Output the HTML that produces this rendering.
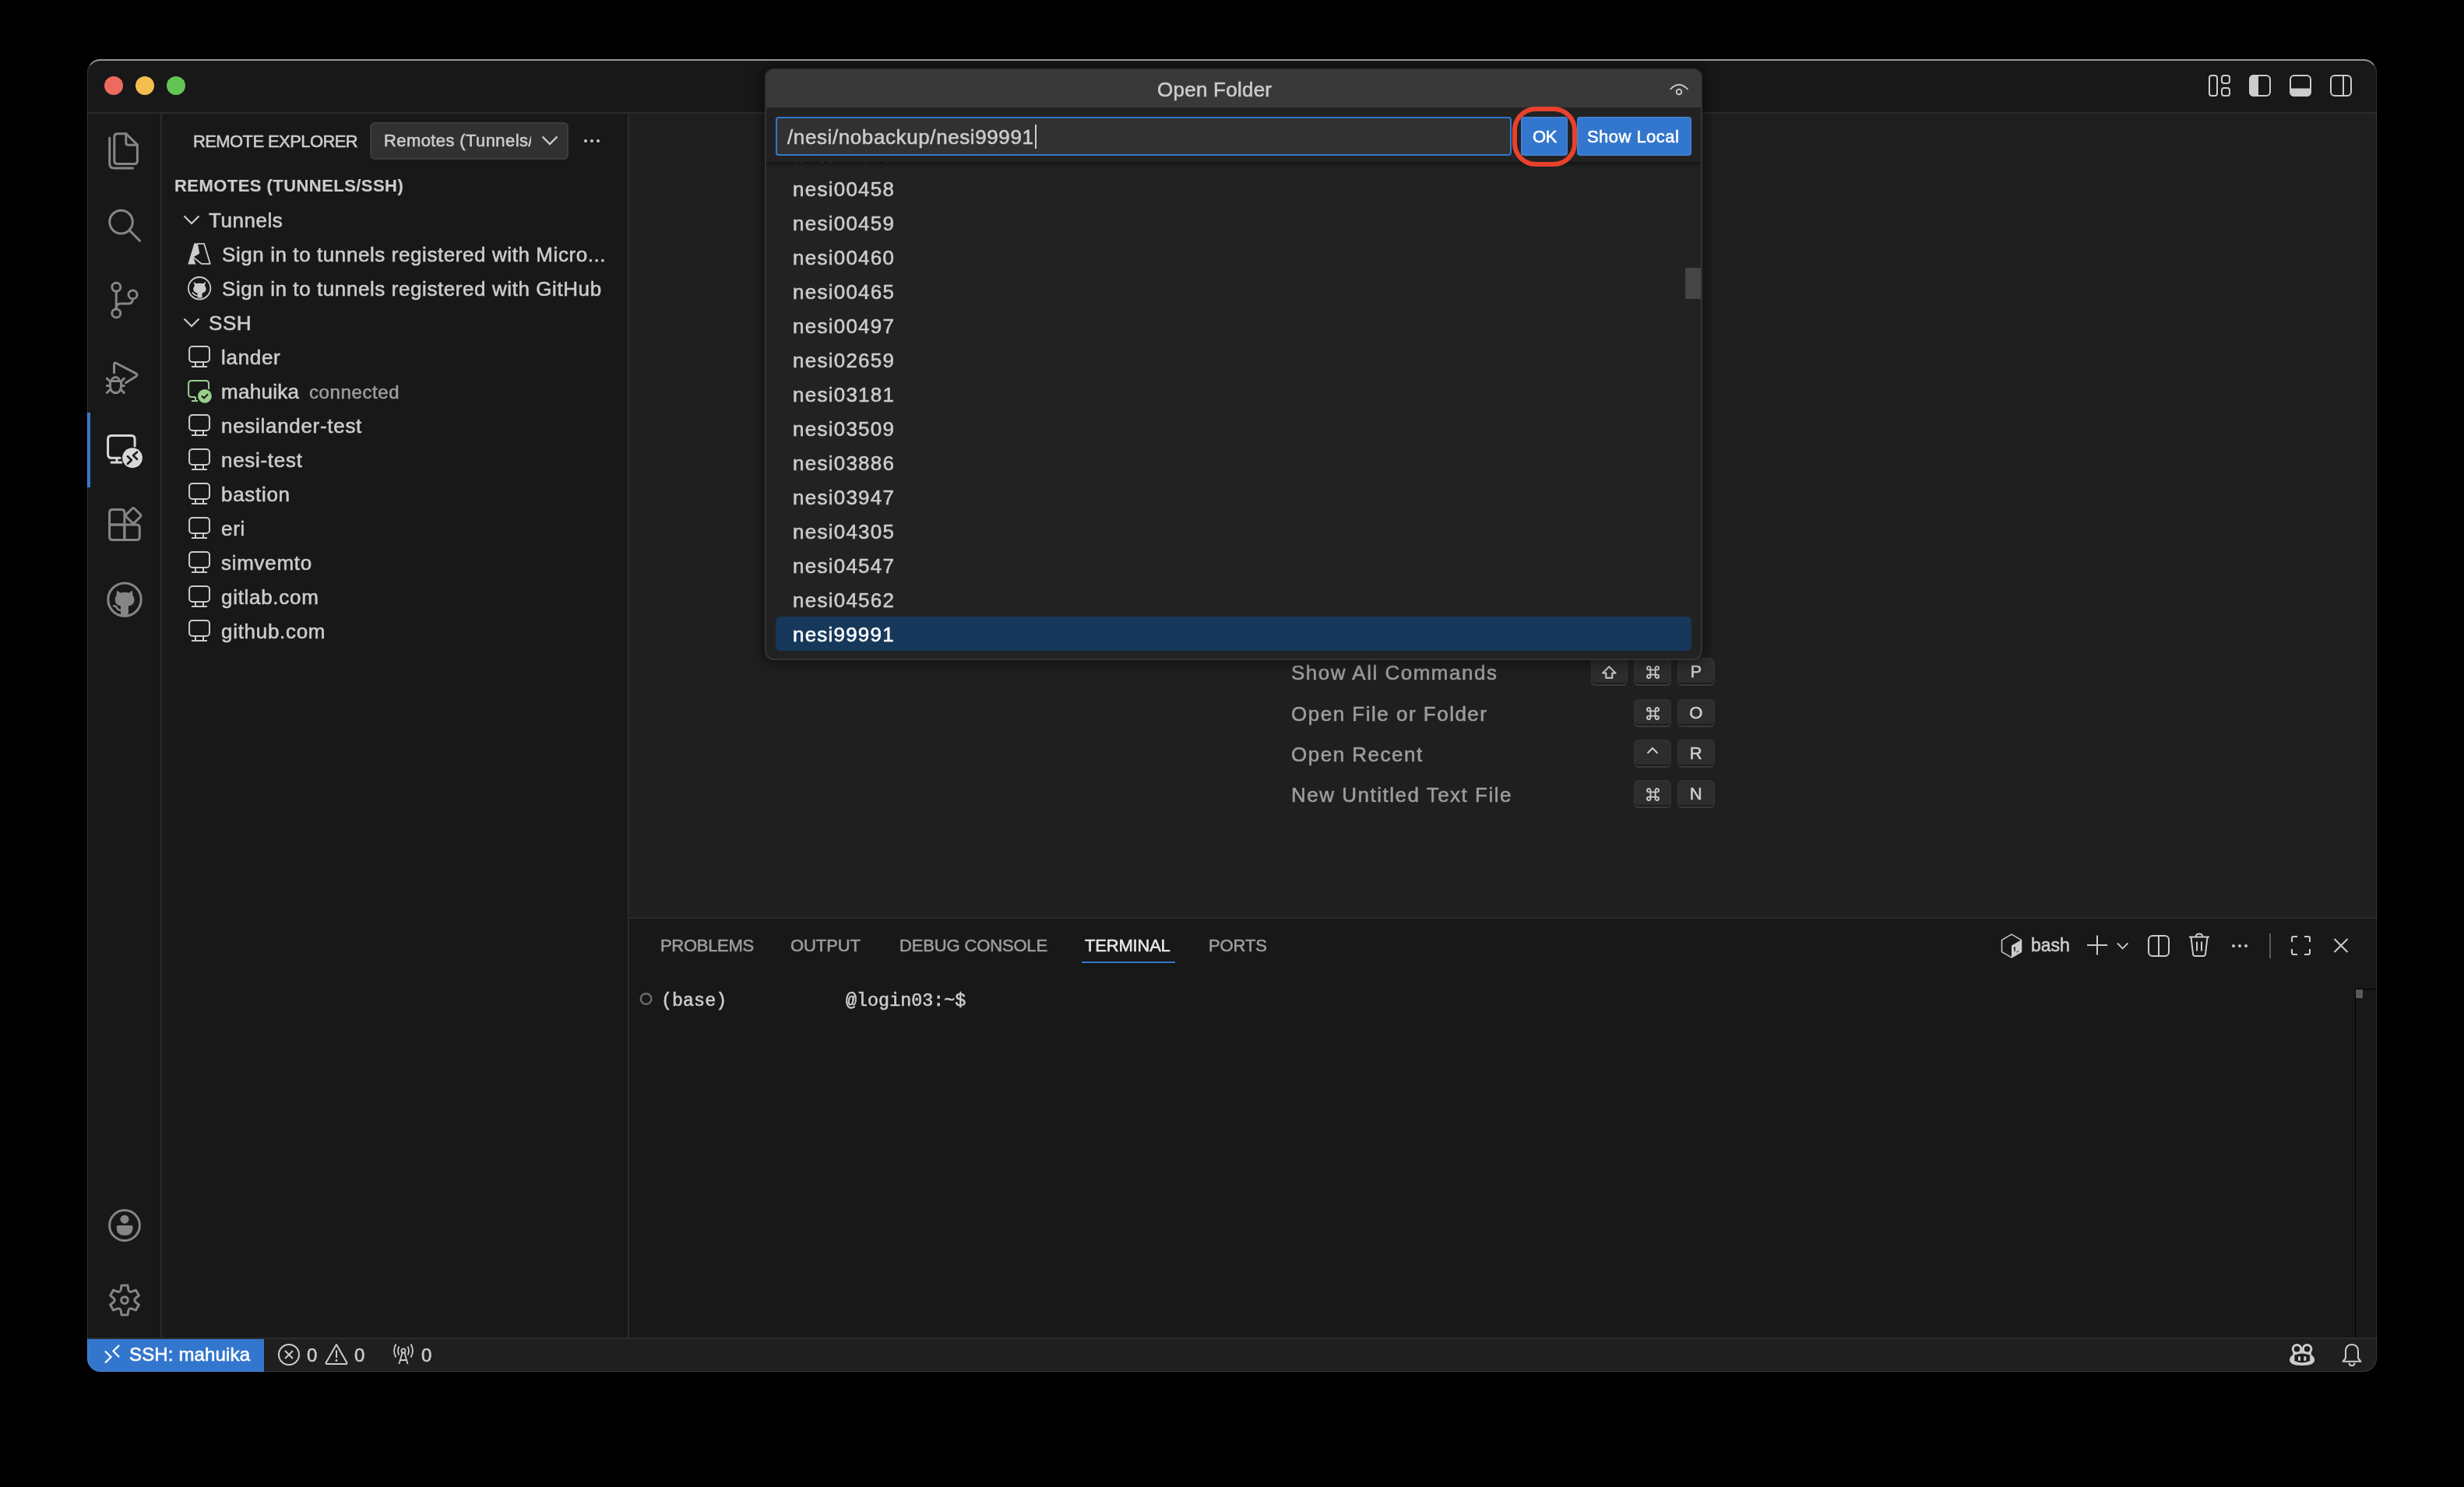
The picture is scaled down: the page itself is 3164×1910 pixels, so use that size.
<!DOCTYPE html><html><head><meta charset="utf-8"><style>
*{box-sizing:border-box}
html,body{margin:0;padding:0}
body{width:3164px;height:1910px;background:#000;overflow:hidden;position:relative;font-family:"Liberation Sans",sans-serif}
.win{position:absolute;left:0;top:0;width:3164px;height:1910px;clip-path:inset(76px 112px 148px 112px round 17px);background:#181818}
.t{position:absolute;line-height:1;white-space:pre;will-change:transform;-webkit-text-stroke:0.55px currentColor}
.r{position:absolute}
svg.r{overflow:visible}
</style></head><body>
<div class="win">
<div class="r" style="left:112px;top:76px;width:2940px;height:69px;background:#181818;"></div>
<div class="r" style="left:112px;top:144px;width:2940px;height:2px;background:#2b2b2b;"></div>
<div class="r" style="left:112px;top:146px;width:94px;height:1572px;background:#181818;"></div>
<div class="r" style="left:206px;top:146px;width:2px;height:1572px;background:#2b2b2b;"></div>
<div class="r" style="left:208px;top:146px;width:598px;height:1572px;background:#181818;"></div>
<div class="r" style="left:806px;top:146px;width:2px;height:1572px;background:#2b2b2b;"></div>
<div class="r" style="left:808px;top:146px;width:2244px;height:1032px;background:#1f1f1f;"></div>
<div class="r" style="left:808px;top:1178px;width:2244px;height:2px;background:#2b2b2b;"></div>
<div class="r" style="left:808px;top:1180px;width:2244px;height:538px;background:#181818;"></div>
<div class="r" style="left:112px;top:1718px;width:2940px;height:2px;background:#2b2b2b;"></div>
<div class="r" style="left:112px;top:1720px;width:2940px;height:42px;background:#1f1f1f;"></div>
<div class="r" style="left:134px;top:98px;width:24px;height:24px;background:#ed6a5e;border-radius:50%"></div>
<div class="r" style="left:174px;top:98px;width:24px;height:24px;background:#f4bf4f;border-radius:50%"></div>
<div class="r" style="left:214px;top:98px;width:24px;height:24px;background:#61c554;border-radius:50%"></div>
<svg class="r" style="left:2836px;top:96px;" width="28" height="28" viewBox="0 0 28 28"><rect x="1" y="1" width="10" height="26" rx="3" fill="none" stroke="#cccccc" stroke-width="2"/><rect x="17" y="1" width="10" height="10" rx="3" fill="none" stroke="#cccccc" stroke-width="2"/><rect x="17" y="17" width="10" height="10" rx="3" fill="none" stroke="#cccccc" stroke-width="2"/></svg>
<svg class="r" style="left:2888px;top:96px;" width="28" height="28" viewBox="0 0 28 28"><path d="M6 0H12V28H6A6 6 0 0 1 0 22V6A6 6 0 0 1 6 0Z" fill="#cccccc"/><rect x="1" y="1" width="26" height="26" rx="5" fill="none" stroke="#cccccc" stroke-width="2"/></svg>
<svg class="r" style="left:2940px;top:96px;" width="28" height="28" viewBox="0 0 28 28"><path d="M0 17.6H28V22A6 6 0 0 1 22 28H6A6 6 0 0 1 0 22Z" fill="#cccccc"/><rect x="1" y="1" width="26" height="26" rx="5" fill="none" stroke="#cccccc" stroke-width="2"/></svg>
<svg class="r" style="left:2992px;top:96px;" width="28" height="28" viewBox="0 0 28 28"><rect x="1" y="1" width="26" height="26" rx="5" fill="none" stroke="#cccccc" stroke-width="2"/><rect x="16" y="1" width="2" height="26" fill="#cccccc"/></svg>
<svg class="r" style="left:136px;top:170px;" width="48" height="48" viewBox="0 0 48 48"><path d="M14.8 1.7H26L40.4 16.1V36.4Q40.4 40.4 36.4 40.4H14.8Q10.8 40.4 10.8 36.4V5.7Q10.8 1.7 14.8 1.7Z" fill="none" stroke="#868686" stroke-width="3" stroke-linecap="round" stroke-linejoin="round"/><path d="M25.8 1.7V13.3Q25.8 16.3 28.8 16.3H40.4" fill="none" stroke="#868686" stroke-width="3" stroke-linecap="round" stroke-linejoin="round"/><path d="M4.7 7V40Q4.7 46 10.7 46H34.5" fill="none" stroke="#868686" stroke-width="3" stroke-linecap="round" stroke-linejoin="round"/></svg>
<svg class="r" style="left:136px;top:266px;" width="48" height="48" viewBox="0 0 48 48"><circle cx="19.5" cy="19.1" r="14.8" fill="none" stroke="#868686" stroke-width="3" stroke-linecap="round" stroke-linejoin="round"/><path d="M30 29.6L43.5 43.2" fill="none" stroke="#868686" stroke-width="3" stroke-linecap="round" stroke-linejoin="round"/></svg>
<svg class="r" style="left:136px;top:362px;" width="48" height="48" viewBox="0 0 48 48"><circle cx="13.3" cy="6.8" r="5.5" fill="none" stroke="#868686" stroke-width="3" stroke-linecap="round" stroke-linejoin="round"/><circle cx="34.5" cy="16.4" r="5.5" fill="none" stroke="#868686" stroke-width="3" stroke-linecap="round" stroke-linejoin="round"/><circle cx="13.3" cy="40.4" r="5.5" fill="none" stroke="#868686" stroke-width="3" stroke-linecap="round" stroke-linejoin="round"/><path d="M13.3 12.3V34.9" fill="none" stroke="#868686" stroke-width="3" stroke-linecap="round" stroke-linejoin="round"/><path d="M34.5 21.9Q34.5 28 28.5 28H19Q13.3 28 13.3 34" fill="none" stroke="#868686" stroke-width="3" stroke-linecap="round" stroke-linejoin="round"/></svg>
<svg class="r" style="left:136px;top:458px;" width="48" height="48" viewBox="0 0 48 48"><path d="M10.5 20.8V10.2Q10.5 7.2 13.2 8.5L38.5 21.6Q41.5 23.4 38.6 25.4L25.5 33.7" fill="none" stroke="#868686" stroke-width="3" stroke-linecap="round" stroke-linejoin="round"/><path d="M5.5 31.5V39.1A7 7.5 0 0 0 19.5 39.1V31.5Z" fill="none" stroke="#868686" stroke-width="3" stroke-linecap="round" stroke-linejoin="round"/><path d="M7.3 31.5A5 5 0 0 1 17.3 31.5" fill="none" stroke="#868686" stroke-width="3" stroke-linecap="round" stroke-linejoin="round"/><path d="M1.3 28.1L5.5 32M1.3 37.6H5.5M1.3 46.4L6 42M23.3 28.1L19.5 32M23.3 37.6H19.5M23.3 46.4L18.6 42" fill="none" stroke="#868686" stroke-width="3" stroke-linecap="round" stroke-linejoin="round"/></svg>
<svg class="r" style="left:136px;top:554px;" width="48" height="48" viewBox="0 0 48 48"><path d="M18.2 34.2H7.1Q2.6 34.2 2.6 29.7V9.9Q2.6 5.4 7.1 5.4H32.6Q37.1 5.4 37.1 9.9V19" fill="none" stroke="#d7d7d7" stroke-width="3" stroke-linecap="round" stroke-linejoin="round"/><path d="M14 34.2V40M7.1 40H19.8" fill="none" stroke="#d7d7d7" stroke-width="3" stroke-linecap="round" stroke-linejoin="round"/><circle cx="34" cy="34.1" r="12.9" fill="#d7d7d7"/><path d="M27.9 32.1L32.9 37L27.9 41.8M40 26.7L35 31.1L40 35.8" fill="none" stroke="#181818" stroke-width="2.6" stroke-linecap="round" stroke-linejoin="round"/></svg>
<div class="r" style="left:112px;top:530px;width:4px;height:96px;background:#3376cd;"></div>
<svg class="r" style="left:136px;top:650px;" width="48" height="48" viewBox="0 0 48 48"><path d="M4.6 23.9H23.9V43.5H8.6Q4.6 43.5 4.6 39.5Z" fill="none" stroke="#868686" stroke-width="3" stroke-linecap="round" stroke-linejoin="round"/><path d="M8.6 4.6H19.9Q23.9 4.6 23.9 8.6V23.9H4.6V8.6Q4.6 4.6 8.6 4.6Z" fill="none" stroke="#868686" stroke-width="3" stroke-linecap="round" stroke-linejoin="round"/><path d="M23.9 23.9H39.3Q43.3 23.9 43.3 27.9V39.5Q43.3 43.5 39.3 43.5H23.9Z" fill="none" stroke="#868686" stroke-width="3" stroke-linecap="round" stroke-linejoin="round"/><path d="M33.8 3.2Q35.2 1.8 36.6 3.2L44.3 10.9Q45.7 12.3 44.3 13.7L36.6 21.4Q35.2 22.8 33.8 21.4L26.1 13.7Q24.7 12.3 26.1 10.9Z" fill="none" stroke="#868686" stroke-width="3" stroke-linecap="round" stroke-linejoin="round"/></svg>
<svg class="r" style="left:136px;top:746px;" width="48" height="48" viewBox="0 0 48 48"><circle cx="24" cy="24.1" r="21.2" fill="none" stroke="#868686" stroke-width="3" stroke-linecap="round" stroke-linejoin="round"/><path d="M14.5 12.4L18.2 15.4Q24 14 29.8 15.4L33.5 12.4Q34.6 15.5 34.4 18.7Q36.6 21 36.6 24.2Q36.6 31 28.9 32.5V43.5Q24 44.8 19 43.5V32.5Q11.6 31 11.6 24.2Q11.6 21 13.6 18.7Q13.4 15.5 14.5 12.4Z" fill="#868686"/><path d="M10.1 32.3Q12.5 32.3 14.2 35Q16 37.8 19 37.8" fill="none" stroke="#868686" stroke-width="2.6" stroke-linecap="round"/></svg>
<svg class="r" style="left:136px;top:1550px;" width="48" height="48" viewBox="0 0 48 48"><circle cx="24" cy="24" r="19.4" fill="none" stroke="#868686" stroke-width="3" stroke-linecap="round" stroke-linejoin="round"/><circle cx="24" cy="16.2" r="5.55" fill="#868686"/><path d="M15.6 23.9H32.6Q34.6 23.9 34.6 25.9Q34.6 36.8 24 36.8Q13.6 36.8 13.6 25.9Q13.6 23.9 15.6 23.9Z" fill="#868686"/></svg>
<svg class="r" style="left:136px;top:1646px;" width="48" height="48" viewBox="0 0 48 48"><path d="M19.99 5.12L28.01 5.12L28.75 10.20Q29.60 14.30 33.58 12.98L38.34 11.09L42.36 18.04L38.33 21.21Q35.20 24.00 38.33 26.79L42.36 29.96L38.34 36.91L33.58 35.02Q29.60 33.70 28.75 37.80L28.01 42.88L19.99 42.88L19.25 37.80Q18.40 33.70 14.42 35.02L9.66 36.91L5.64 29.96L9.67 26.79Q12.80 24.00 9.67 21.21L5.64 18.04L9.66 11.09L14.42 12.98Q18.40 14.30 19.25 10.20Z" fill="none" stroke="#868686" stroke-width="3" stroke-linecap="round" stroke-linejoin="round"/><circle cx="24" cy="24" r="4.35" fill="none" stroke="#868686" stroke-width="3" stroke-linecap="round" stroke-linejoin="round"/></svg>
<div class="t" style="left:247.5px;top:170.68px;font-size:22px;color:#cccccc;letter-spacing:-0.6px;font-weight:normal;font-family:'Liberation Sans', sans-serif;">REMOTE EXPLORER</div>
<div class="r" style="left:475px;top:157px;width:255px;height:48px;background:#313131;border:2px solid #3c3c3c;border-radius:6px"></div>
<div class="r" style="left:477px;top:159px;width:205px;height:44px;overflow:hidden"><div class="t" style="left:15.5px;top:11.38px;font-size:22px;color:#cccccc;letter-spacing:0.4px;font-weight:normal;font-family:'Liberation Sans', sans-serif;">Remotes (Tunnels/SSH)</div>
</div>
<svg class="r" style="left:695px;top:174px;" width="22" height="14" viewBox="0 0 22 14"><path d="M1.5 1.5L11 11L20.5 1.5" fill="none" stroke="#cccccc" stroke-width="2.4"/></svg>
<div class="r" style="left:749.5px;top:178.9px;width:4.2px;height:4.2px;background:#cccccc;border-radius:50%"></div>
<div class="r" style="left:757.6999999999999px;top:178.9px;width:4.2px;height:4.2px;background:#cccccc;border-radius:50%"></div>
<div class="r" style="left:765.9px;top:178.9px;width:4.2px;height:4.2px;background:#cccccc;border-radius:50%"></div>
<div class="t" style="left:223.5px;top:227.58px;font-size:22px;color:#cccccc;letter-spacing:0.45px;font-weight:bold;font-family:'Liberation Sans', sans-serif;-webkit-text-stroke:0.15px currentColor">REMOTES (TUNNELS/SSH)</div>
<svg class="r" style="left:235px;top:276px;" width="22" height="14" viewBox="0 0 22 14"><path d="M1.5 1.5L11 11L20.5 1.5" fill="none" stroke="#cccccc" stroke-width="2.2"/></svg>
<div class="t" style="left:268px;top:269.99px;font-size:26px;color:#cccccc;letter-spacing:0.55px;font-weight:normal;font-family:'Liberation Sans', sans-serif;">Tunnels</div>
<svg class="r" style="left:235px;top:408px;" width="22" height="14" viewBox="0 0 22 14"><path d="M1.5 1.5L11 11L20.5 1.5" fill="none" stroke="#cccccc" stroke-width="2.2"/></svg>
<div class="t" style="left:267.5px;top:401.59px;font-size:26px;color:#cccccc;letter-spacing:0.55px;font-weight:normal;font-family:'Liberation Sans', sans-serif;">SSH</div>
<svg class="r" style="left:241px;top:312px;" width="30" height="28" viewBox="0 0 30 28"><path d="M8.4 0.4H12.9L15.2 13.6L7.1 18.4L10.4 27.6H0.3Z" fill="#cccccc"/><path d="M12.9 1.2H21.2L28.8 26.8H17.6L7.1 18.4" fill="none" stroke="#cccccc" stroke-width="1.8" stroke-linejoin="round"/></svg>
<div class="t" style="left:284.5px;top:314.49px;font-size:26px;color:#cccccc;letter-spacing:0.58px;font-weight:normal;font-family:'Liberation Sans', sans-serif;">Sign in to tunnels registered with Micro...</div>
<svg class="r" style="left:241px;top:355px;" width="30" height="30" viewBox="0 0 30 30"><circle cx="15.1" cy="15.2" r="14.2" fill="none" stroke="#cccccc" stroke-width="1.8"/><path d="M7.5 7L9 12Q6.8 14.5 7.2 17Q8 20.5 12.5 21.5V27.5H18.5V21.5Q23 20.5 23.6 17Q24 14.5 21.8 12L23.3 7L19.5 9.2Q15.4 8.4 11.3 9.2Z" fill="#cccccc"/><path d="M6 20.5Q8.5 24.5 12.5 24.5" fill="none" stroke="#cccccc" stroke-width="1.6"/></svg>
<div class="t" style="left:284.5px;top:358.49px;font-size:26px;color:#cccccc;letter-spacing:0.58px;font-weight:normal;font-family:'Liberation Sans', sans-serif;">Sign in to tunnels registered with GitHub</div>
<svg class="r" style="left:241px;top:444px;" width="30" height="30" viewBox="0 0 30 30"><rect x="2.1" y="1" width="25.9" height="20" rx="4" fill="none" stroke="#cccccc" stroke-width="2"/><path d="M10 22V27M20 22V27M5 27H25" fill="none" stroke="#cccccc" stroke-width="2"/></svg>
<div class="t" style="left:284px;top:445.99px;font-size:26px;color:#cccccc;letter-spacing:0.7px;font-weight:normal;font-family:'Liberation Sans', sans-serif;">lander</div>
<svg class="r" style="left:241px;top:488px;" width="32" height="32" viewBox="0 0 32 32"><path d="M27.1 12V5Q27.1 1 23.1 1H5.1Q1.1 1 1.1 5V18Q1.1 22 5.1 22H10" fill="none" stroke="#99cf8c" stroke-width="2"/><path d="M10 22V27M5 27H13" fill="none" stroke="#99cf8c" stroke-width="2"/><circle cx="22" cy="20.8" r="8.9" fill="#99cf8c"/><path d="M18 20.5L21 23.3L26 18.3" fill="none" stroke="#181818" stroke-width="2"/></svg>
<div class="t" style="left:284px;top:489.99px;font-size:26px;color:#cccccc;letter-spacing:0.3px;font-weight:normal;font-family:'Liberation Sans', sans-serif;">mahuika</div>
<div class="t" style="left:397px;top:491.68px;font-size:24px;color:#9d9d9d;letter-spacing:0.6px;font-weight:normal;font-family:'Liberation Sans', sans-serif;">connected</div>
<svg class="r" style="left:241px;top:532px;" width="30" height="30" viewBox="0 0 30 30"><rect x="2.1" y="1" width="25.9" height="20" rx="4" fill="none" stroke="#cccccc" stroke-width="2"/><path d="M10 22V27M20 22V27M5 27H25" fill="none" stroke="#cccccc" stroke-width="2"/></svg>
<div class="t" style="left:284px;top:533.99px;font-size:26px;color:#cccccc;letter-spacing:0.7px;font-weight:normal;font-family:'Liberation Sans', sans-serif;">nesilander-test</div>
<svg class="r" style="left:241px;top:576px;" width="30" height="30" viewBox="0 0 30 30"><rect x="2.1" y="1" width="25.9" height="20" rx="4" fill="none" stroke="#cccccc" stroke-width="2"/><path d="M10 22V27M20 22V27M5 27H25" fill="none" stroke="#cccccc" stroke-width="2"/></svg>
<div class="t" style="left:284px;top:577.99px;font-size:26px;color:#cccccc;letter-spacing:0.7px;font-weight:normal;font-family:'Liberation Sans', sans-serif;">nesi-test</div>
<svg class="r" style="left:241px;top:620px;" width="30" height="30" viewBox="0 0 30 30"><rect x="2.1" y="1" width="25.9" height="20" rx="4" fill="none" stroke="#cccccc" stroke-width="2"/><path d="M10 22V27M20 22V27M5 27H25" fill="none" stroke="#cccccc" stroke-width="2"/></svg>
<div class="t" style="left:284px;top:621.99px;font-size:26px;color:#cccccc;letter-spacing:0.7px;font-weight:normal;font-family:'Liberation Sans', sans-serif;">bastion</div>
<svg class="r" style="left:241px;top:664px;" width="30" height="30" viewBox="0 0 30 30"><rect x="2.1" y="1" width="25.9" height="20" rx="4" fill="none" stroke="#cccccc" stroke-width="2"/><path d="M10 22V27M20 22V27M5 27H25" fill="none" stroke="#cccccc" stroke-width="2"/></svg>
<div class="t" style="left:284px;top:665.99px;font-size:26px;color:#cccccc;letter-spacing:0.7px;font-weight:normal;font-family:'Liberation Sans', sans-serif;">eri</div>
<svg class="r" style="left:241px;top:708px;" width="30" height="30" viewBox="0 0 30 30"><rect x="2.1" y="1" width="25.9" height="20" rx="4" fill="none" stroke="#cccccc" stroke-width="2"/><path d="M10 22V27M20 22V27M5 27H25" fill="none" stroke="#cccccc" stroke-width="2"/></svg>
<div class="t" style="left:284px;top:709.99px;font-size:26px;color:#cccccc;letter-spacing:0.7px;font-weight:normal;font-family:'Liberation Sans', sans-serif;">simvemto</div>
<svg class="r" style="left:241px;top:752px;" width="30" height="30" viewBox="0 0 30 30"><rect x="2.1" y="1" width="25.9" height="20" rx="4" fill="none" stroke="#cccccc" stroke-width="2"/><path d="M10 22V27M20 22V27M5 27H25" fill="none" stroke="#cccccc" stroke-width="2"/></svg>
<div class="t" style="left:284px;top:753.99px;font-size:26px;color:#cccccc;letter-spacing:0.7px;font-weight:normal;font-family:'Liberation Sans', sans-serif;">gitlab.com</div>
<svg class="r" style="left:241px;top:796px;" width="30" height="30" viewBox="0 0 30 30"><rect x="2.1" y="1" width="25.9" height="20" rx="4" fill="none" stroke="#cccccc" stroke-width="2"/><path d="M10 22V27M20 22V27M5 27H25" fill="none" stroke="#cccccc" stroke-width="2"/></svg>
<div class="t" style="left:284px;top:797.99px;font-size:26px;color:#cccccc;letter-spacing:0.7px;font-weight:normal;font-family:'Liberation Sans', sans-serif;">github.com</div>
<div class="t" style="left:1657.5px;top:850.99px;font-size:26px;color:#9d9d9d;letter-spacing:1.5px;font-weight:normal;font-family:'Liberation Sans', sans-serif;">Show All Commands</div>
<div class="r" style="left:2154.4px;top:845.3px;width:47.5px;height:35.5px;border-radius:6px;background:#2d2d2d;border:2px solid rgba(51,51,51,0.8);border-bottom-color:#3a3a3a;box-shadow:inset 0 -2px 0 rgba(0,0,0,0.36)"></div>
<div class="t" style="left:2154.4px;width:47.5px;text-align:center;top:852.48px;font-size:22px;color:#cccccc">P</div>
<div class="r" style="left:2098.3px;top:845.3px;width:47.5px;height:35.5px;border-radius:6px;background:#2d2d2d;border:2px solid rgba(51,51,51,0.8);border-bottom-color:#3a3a3a;box-shadow:inset 0 -2px 0 rgba(0,0,0,0.36)"></div>
<svg class="r" style="left:2113.55px;top:854.8px;" width="17" height="17" viewBox="0 0 17 17"><path d="M5.4 5.4V3.2A2.2 2.2 0 1 0 3.2 5.4H13.8A2.2 2.2 0 1 0 11.6 3.2V13.8A2.2 2.2 0 1 0 13.8 11.6H3.2A2.2 2.2 0 1 0 5.4 13.8Z" fill="none" stroke="#cccccc" stroke-width="1.9"/></svg>
<div class="r" style="left:2042.5px;top:845.3px;width:47.5px;height:35.5px;border-radius:6px;background:#2d2d2d;border:2px solid rgba(51,51,51,0.8);border-bottom-color:#3a3a3a;box-shadow:inset 0 -2px 0 rgba(0,0,0,0.36)"></div>
<svg class="r" style="left:2056.95px;top:854.8px;" width="19" height="17" viewBox="0 0 19 17"><path d="M9.3 1.2L17.6 9.6H13.3V15.8H5.3V9.6H1Z" fill="none" stroke="#cccccc" stroke-width="2" stroke-linejoin="round"/></svg>
<div class="t" style="left:1657.5px;top:903.99px;font-size:26px;color:#9d9d9d;letter-spacing:1.5px;font-weight:normal;font-family:'Liberation Sans', sans-serif;">Open File or Folder</div>
<div class="r" style="left:2154.4px;top:898.3px;width:47.5px;height:35.5px;border-radius:6px;background:#2d2d2d;border:2px solid rgba(51,51,51,0.8);border-bottom-color:#3a3a3a;box-shadow:inset 0 -2px 0 rgba(0,0,0,0.36)"></div>
<div class="t" style="left:2154.4px;width:47.5px;text-align:center;top:905.48px;font-size:22px;color:#cccccc">O</div>
<div class="r" style="left:2098.3px;top:898.3px;width:47.5px;height:35.5px;border-radius:6px;background:#2d2d2d;border:2px solid rgba(51,51,51,0.8);border-bottom-color:#3a3a3a;box-shadow:inset 0 -2px 0 rgba(0,0,0,0.36)"></div>
<svg class="r" style="left:2113.55px;top:907.8px;" width="17" height="17" viewBox="0 0 17 17"><path d="M5.4 5.4V3.2A2.2 2.2 0 1 0 3.2 5.4H13.8A2.2 2.2 0 1 0 11.6 3.2V13.8A2.2 2.2 0 1 0 13.8 11.6H3.2A2.2 2.2 0 1 0 5.4 13.8Z" fill="none" stroke="#cccccc" stroke-width="1.9"/></svg>
<div class="t" style="left:1657.5px;top:956.29px;font-size:26px;color:#9d9d9d;letter-spacing:1.5px;font-weight:normal;font-family:'Liberation Sans', sans-serif;">Open Recent</div>
<div class="r" style="left:2154.4px;top:950.2px;width:47.5px;height:35.5px;border-radius:6px;background:#2d2d2d;border:2px solid rgba(51,51,51,0.8);border-bottom-color:#3a3a3a;box-shadow:inset 0 -2px 0 rgba(0,0,0,0.36)"></div>
<div class="t" style="left:2154.4px;width:47.5px;text-align:center;top:957.38px;font-size:22px;color:#cccccc">R</div>
<div class="r" style="left:2098.3px;top:950.2px;width:47.5px;height:35.5px;border-radius:6px;background:#2d2d2d;border:2px solid rgba(51,51,51,0.8);border-bottom-color:#3a3a3a;box-shadow:inset 0 -2px 0 rgba(0,0,0,0.36)"></div>
<svg class="r" style="left:2114.05px;top:959.2px;" width="16" height="10" viewBox="0 0 16 10"><path d="M1.5 8.5L8 2L14.5 8.5" fill="none" stroke="#cccccc" stroke-width="2"/></svg>
<div class="t" style="left:1657.5px;top:1007.99px;font-size:26px;color:#9d9d9d;letter-spacing:1.5px;font-weight:normal;font-family:'Liberation Sans', sans-serif;">New Untitled Text File</div>
<div class="r" style="left:2154.4px;top:1002.3px;width:47.5px;height:35.5px;border-radius:6px;background:#2d2d2d;border:2px solid rgba(51,51,51,0.8);border-bottom-color:#3a3a3a;box-shadow:inset 0 -2px 0 rgba(0,0,0,0.36)"></div>
<div class="t" style="left:2154.4px;width:47.5px;text-align:center;top:1009.48px;font-size:22px;color:#cccccc">N</div>
<div class="r" style="left:2098.3px;top:1002.3px;width:47.5px;height:35.5px;border-radius:6px;background:#2d2d2d;border:2px solid rgba(51,51,51,0.8);border-bottom-color:#3a3a3a;box-shadow:inset 0 -2px 0 rgba(0,0,0,0.36)"></div>
<svg class="r" style="left:2113.55px;top:1011.8px;" width="17" height="17" viewBox="0 0 17 17"><path d="M5.4 5.4V3.2A2.2 2.2 0 1 0 3.2 5.4H13.8A2.2 2.2 0 1 0 11.6 3.2V13.8A2.2 2.2 0 1 0 13.8 11.6H3.2A2.2 2.2 0 1 0 5.4 13.8Z" fill="none" stroke="#cccccc" stroke-width="1.9"/></svg>
<div class="t" style="left:847.5px;top:1204.18px;font-size:22px;color:#9d9d9d;letter-spacing:-0.3px;font-weight:normal;font-family:'Liberation Sans', sans-serif;">PROBLEMS</div>
<div class="t" style="left:1015px;top:1204.18px;font-size:22px;color:#9d9d9d;letter-spacing:-0.1px;font-weight:normal;font-family:'Liberation Sans', sans-serif;">OUTPUT</div>
<div class="t" style="left:1154.5px;top:1204.18px;font-size:22px;color:#9d9d9d;letter-spacing:-0.15px;font-weight:normal;font-family:'Liberation Sans', sans-serif;">DEBUG CONSOLE</div>
<div class="t" style="left:1393px;top:1204.18px;font-size:22px;color:#e7e7e7;letter-spacing:-0.2px;font-weight:normal;font-family:'Liberation Sans', sans-serif;">TERMINAL</div>
<div class="t" style="left:1552px;top:1204.18px;font-size:22px;color:#9d9d9d;letter-spacing:-0.1px;font-weight:normal;font-family:'Liberation Sans', sans-serif;">PORTS</div>
<div class="r" style="left:1389px;top:1234.5px;width:119.5px;height:2px;background:#3376cd;"></div>
<svg class="r" style="left:820px;top:1274px;" width="20" height="20" viewBox="0 0 20 20"><circle cx="9.6" cy="9" r="6.8" fill="none" stroke="#6b6b6b" stroke-width="2.4"/></svg>
<div class="t" style="left:849px;top:1274.66px;font-size:23.4px;color:#cccccc;letter-spacing:0px;font-weight:normal;font-family:'Liberation Mono', monospace;">(base)</div>
<div class="t" style="left:1086.3px;top:1274.66px;font-size:23.4px;color:#cccccc;letter-spacing:0px;font-weight:normal;font-family:'Liberation Mono', monospace;">@login03:~$</div>
<div class="r" style="left:3024px;top:1270px;width:1px;height:448px;background:#000000;"></div>
<div class="r" style="left:3024px;top:1270px;width:28px;height:1px;background:#000000;"></div>
<div class="r" style="left:3025px;top:1271px;width:9px;height:11px;background:#5a5a5a;"></div>
<svg class="r" style="left:2569px;top:1199px;" width="28" height="32" viewBox="0 0 28 32"><path d="M14 1.2L26.5 8.3V23.7L14 30.8L1.5 23.7V8.3Z" fill="none" stroke="#cccccc" stroke-width="1.5" stroke-linejoin="round"/><path d="M26.5 8.3V23.7L14 30.8V15.5Z" fill="#cccccc"/><path d="M17.5 19.5Q16.5 18.8 17.5 18.2Q19 17.6 18.2 20.2Q17.3 22 18.6 21.6M18 17V23.5M20.5 24L23 22.6" fill="none" stroke="#181818" stroke-width="1"/></svg>
<div class="t" style="left:2607.5px;top:1203.33px;font-size:23px;color:#cccccc;letter-spacing:0px;font-weight:normal;font-family:'Liberation Sans', sans-serif;">bash</div>
<svg class="r" style="left:2679px;top:1200px;" width="28" height="28" viewBox="0 0 28 28"><path d="M14 1.5V26.5M1 14H27" fill="none" stroke="#cccccc" stroke-width="2"/></svg>
<svg class="r" style="left:2718px;top:1210px;" width="16" height="11" viewBox="0 0 16 11"><path d="M1 1.5L7.6 8.3L14.4 1.5" fill="none" stroke="#cccccc" stroke-width="1.8"/></svg>
<svg class="r" style="left:2758px;top:1201px;" width="28" height="28" viewBox="0 0 28 28"><rect x="1" y="1" width="26" height="26" rx="5" fill="none" stroke="#cccccc" stroke-width="2"/><path d="M14 1V27" stroke="#cccccc" stroke-width="2"/></svg>
<svg class="r" style="left:2810px;top:1198px;" width="28" height="32" viewBox="0 0 28 32"><path d="M1 5.5H27M10 5.5V4Q10 1.5 14 1.5Q18 1.5 18 4V5.5M3.5 5.5L6 27.5Q6.3 30 8.8 30H19.2Q21.7 30 22 27.5L24.5 5.5M11 11.5V23.5M17 11.5V23.5" fill="none" stroke="#cccccc" stroke-width="2"/></svg>
<div class="r" style="left:2865.7px;top:1212.7px;width:4.6px;height:4.6px;background:#cccccc;border-radius:50%"></div>
<div class="r" style="left:2873.7px;top:1212.7px;width:4.6px;height:4.6px;background:#cccccc;border-radius:50%"></div>
<div class="r" style="left:2881.7px;top:1212.7px;width:4.6px;height:4.6px;background:#cccccc;border-radius:50%"></div>
<div class="r" style="left:2914px;top:1199px;width:2px;height:32px;background:#5a5a5a;"></div>
<svg class="r" style="left:2942px;top:1202px;" width="25" height="25" viewBox="0 0 25 25"><path d="M1 8V3Q1 1 3 1H8M17 1H22Q24 1 24 3V8M24 17V22Q24 24 22 24H17M8 24H3Q1 24 1 22V17" fill="none" stroke="#cccccc" stroke-width="2"/></svg>
<svg class="r" style="left:2996px;top:1205px;" width="20" height="19" viewBox="0 0 20 19"><path d="M1.5 1L18.5 18M18.5 1L1.5 18" fill="none" stroke="#cccccc" stroke-width="2"/></svg>
<div class="r" style="left:112px;top:1720px;width:227px;height:42px;background:#3376cd;"></div>
<svg class="r" style="left:132px;top:1726px;" width="24" height="28" viewBox="0 0 24 28"><path d="M3 9.5L10.5 17L3 24.5M21 2L13.5 9.5L21 17" fill="none" stroke="#ffffff" stroke-width="2.2"/></svg>
<div class="t" style="left:166px;top:1728.38px;font-size:24px;color:#ffffff;letter-spacing:0.15px;font-weight:normal;font-family:'Liberation Sans', sans-serif;">SSH: mahuika</div>
<svg class="r" style="left:356px;top:1725px;" width="30" height="30" viewBox="0 0 30 30"><circle cx="15" cy="15" r="13" fill="none" stroke="#cccccc" stroke-width="2"/><path d="M10 10L20 20M20 10L10 20" stroke="#cccccc" stroke-width="2"/></svg>
<div class="t" style="left:394.4px;top:1728.98px;font-size:24px;color:#cccccc;letter-spacing:0px;font-weight:normal;font-family:'Liberation Sans', sans-serif;">0</div>
<svg class="r" style="left:417px;top:1725px;" width="30" height="28" viewBox="0 0 30 28"><path d="M15 2L28.5 25.5Q28.5 27 27 27H3Q1.5 27 1.5 25.5Z" fill="none" stroke="#cccccc" stroke-width="2" stroke-linejoin="round"/><path d="M15 9.5V19" stroke="#cccccc" stroke-width="2"/><circle cx="15" cy="22.5" r="1.4" fill="#cccccc"/></svg>
<div class="t" style="left:454.7px;top:1728.98px;font-size:24px;color:#cccccc;letter-spacing:0px;font-weight:normal;font-family:'Liberation Sans', sans-serif;">0</div>
<svg class="r" style="left:504px;top:1725px;" width="28" height="28" viewBox="0 0 28 28"><circle cx="14" cy="10" r="2.6" fill="none" stroke="#cccccc" stroke-width="1.8"/><path d="M12.6 12.5L8.5 27M15.4 12.5L19.5 27M10.3 22H17.7" fill="none" stroke="#cccccc" stroke-width="1.8"/><path d="M8.5 4.5Q5.5 10 8.5 15.5M19.5 4.5Q22.5 10 19.5 15.5M4.5 1.5Q-0.5 10 4.5 18.5M23.5 1.5Q28.5 10 23.5 18.5" fill="none" stroke="#cccccc" stroke-width="1.8"/></svg>
<div class="t" style="left:540.5px;top:1728.98px;font-size:24px;color:#cccccc;letter-spacing:0px;font-weight:normal;font-family:'Liberation Sans', sans-serif;">0</div>
<svg class="r" style="left:2939px;top:1725px;" width="34" height="30" viewBox="0 0 34 30"><path d="M17 29C5 29 1 26 1 21.5C1 18.5 3.5 16.5 5.3 15V8H28.9V15C30.7 16.5 33.2 18.5 33.2 21.5C33.2 26 29 29 17 29Z" fill="#cccccc"/><path d="M7.4 15.5Q17 11.5 27.1 15.5V23Q17 27.5 7.4 23Z" fill="#1f1f1f"/><circle cx="10.5" cy="7.8" r="5.3" fill="#1f1f1f" stroke="#cccccc" stroke-width="3"/><circle cx="23.6" cy="7.8" r="5.3" fill="#1f1f1f" stroke="#cccccc" stroke-width="3"/><rect x="12" y="17" width="3" height="6" rx="1.5" fill="#cccccc"/><rect x="19.3" y="17" width="3" height="6" rx="1.5" fill="#cccccc"/></svg>
<svg class="r" style="left:3007px;top:1725px;" width="26" height="30" viewBox="0 0 26 30"><path d="M5 19.5V11Q5 2 13 2Q21 2 21 11V19.5L24.5 23.8H1.5Z" fill="none" stroke="#cccccc" stroke-width="2" stroke-linejoin="round"/><path d="M9.5 25.5Q9.5 29 13 29Q16.5 29 16.5 25.5" fill="none" stroke="#cccccc" stroke-width="2"/></svg>
<div class="r" style="left:982px;top:88px;width:1204px;height:760px;border-radius:12px;background:#222222;box-shadow:0 0 16px 4px rgba(0,0,0,0.45);overflow:hidden">
<div class="r" style="left:0px;top:0px;width:1204px;height:50px;background:#393939;"></div>
<div class="t" style="left:503.5px;top:14.09px;font-size:26px;color:#cccccc;letter-spacing:0.25px;font-weight:normal;font-family:'Liberation Sans', sans-serif;">Open Folder</div>
<svg class="r" style="left:1161px;top:16px;" width="26" height="20" viewBox="0 0 26 20"><path d="M1.5 11Q12.8 -1.5 24.5 11" fill="none" stroke="#cccccc" stroke-width="1.8"/><circle cx="13" cy="14" r="3.3" fill="none" stroke="#cccccc" stroke-width="1.8"/></svg>
<div class="r" style="left:14px;top:62px;width:945px;height:49.5px;background:#313131;border:2px solid #3376cd;border-radius:4px"></div>
<div class="t" style="left:28.5px;top:74.59px;font-size:26px;color:#cccccc;letter-spacing:0.6px;font-weight:normal;font-family:'Liberation Sans', sans-serif;">/nesi/nobackup/nesi99991</div>
<div class="r" style="left:347px;top:72px;width:2px;height:31px;background:#cccccc;"></div>
<div class="r" style="left:971px;top:62px;width:60px;height:50px;background:#3376cd;border-radius:4px;box-shadow:inset 0 0 0 1.5px rgba(255,255,255,0.1)"></div>
<div class="t" style="left:985.5px;top:76.58px;font-size:22px;color:#ffffff;letter-spacing:-0.3px;font-weight:normal;font-family:'Liberation Sans', sans-serif;">OK</div>
<div class="r" style="left:1043px;top:62px;width:147px;height:50px;background:#3376cd;border-radius:4px;box-shadow:inset 0 0 0 1.5px rgba(255,255,255,0.1)"></div>
<div class="t" style="left:1056.4px;top:76.58px;font-size:22px;color:#ffffff;letter-spacing:0.45px;font-weight:normal;font-family:'Liberation Sans', sans-serif;">Show Local</div>
<div class="r" style="left:0;top:120px;width:1204px;height:639px;overflow:hidden"><div class="t" style="left:35.700000000000045px;top:-22.11px;font-size:26px;color:#cccccc;letter-spacing:1.25px;font-weight:normal;font-family:'Liberation Sans', sans-serif;">nesi00457</div>
<div class="t" style="left:35.700000000000045px;top:21.89px;font-size:26px;color:#cccccc;letter-spacing:1.25px;font-weight:normal;font-family:'Liberation Sans', sans-serif;">nesi00458</div>
<div class="t" style="left:35.700000000000045px;top:65.89px;font-size:26px;color:#cccccc;letter-spacing:1.25px;font-weight:normal;font-family:'Liberation Sans', sans-serif;">nesi00459</div>
<div class="t" style="left:35.700000000000045px;top:109.89px;font-size:26px;color:#cccccc;letter-spacing:1.25px;font-weight:normal;font-family:'Liberation Sans', sans-serif;">nesi00460</div>
<div class="t" style="left:35.700000000000045px;top:153.89px;font-size:26px;color:#cccccc;letter-spacing:1.25px;font-weight:normal;font-family:'Liberation Sans', sans-serif;">nesi00465</div>
<div class="t" style="left:35.700000000000045px;top:197.89px;font-size:26px;color:#cccccc;letter-spacing:1.25px;font-weight:normal;font-family:'Liberation Sans', sans-serif;">nesi00497</div>
<div class="t" style="left:35.700000000000045px;top:241.89px;font-size:26px;color:#cccccc;letter-spacing:1.25px;font-weight:normal;font-family:'Liberation Sans', sans-serif;">nesi02659</div>
<div class="t" style="left:35.700000000000045px;top:285.89px;font-size:26px;color:#cccccc;letter-spacing:1.25px;font-weight:normal;font-family:'Liberation Sans', sans-serif;">nesi03181</div>
<div class="t" style="left:35.700000000000045px;top:329.89px;font-size:26px;color:#cccccc;letter-spacing:1.25px;font-weight:normal;font-family:'Liberation Sans', sans-serif;">nesi03509</div>
<div class="t" style="left:35.700000000000045px;top:373.89px;font-size:26px;color:#cccccc;letter-spacing:1.25px;font-weight:normal;font-family:'Liberation Sans', sans-serif;">nesi03886</div>
<div class="t" style="left:35.700000000000045px;top:417.89px;font-size:26px;color:#cccccc;letter-spacing:1.25px;font-weight:normal;font-family:'Liberation Sans', sans-serif;">nesi03947</div>
<div class="t" style="left:35.700000000000045px;top:461.89px;font-size:26px;color:#cccccc;letter-spacing:1.25px;font-weight:normal;font-family:'Liberation Sans', sans-serif;">nesi04305</div>
<div class="t" style="left:35.700000000000045px;top:505.89px;font-size:26px;color:#cccccc;letter-spacing:1.25px;font-weight:normal;font-family:'Liberation Sans', sans-serif;">nesi04547</div>
<div class="t" style="left:35.700000000000045px;top:549.89px;font-size:26px;color:#cccccc;letter-spacing:1.25px;font-weight:normal;font-family:'Liberation Sans', sans-serif;">nesi04562</div>
<div class="r" style="left:14px;top:584.0px;width:1176px;height:44px;background:#16385b;border-radius:6px"></div>
<div class="t" style="left:35.700000000000045px;top:593.89px;font-size:26px;color:#ffffff;letter-spacing:1.2px;font-weight:normal;font-family:'Liberation Sans', sans-serif;">nesi99991</div>
<div class="r" style="left:1182px;top:136px;width:20px;height:40px;background:#454545;"></div>
<div class="r" style="left:0;top:0;width:1204px;height:8px;box-shadow:inset 0 6px 6px -4px rgba(0,0,0,0.6)"></div></div>
</div>
<div class="r" style="left:982px;top:88px;width:1204px;height:760px;border-radius:12px;border:2px solid #333333;pointer-events:none"></div>
<div class="r" style="left:1942px;top:137px;width:83px;height:77px;border:6.5px solid #e8412c;border-radius:30px"></div>
</div>
<div class="r" style="left:112px;top:76px;width:2940px;height:1686px;border-radius:17px;border:1px solid rgba(255,255,255,0.12);border-top:2px solid rgba(255,255,255,0.55)"></div>
</body></html>
